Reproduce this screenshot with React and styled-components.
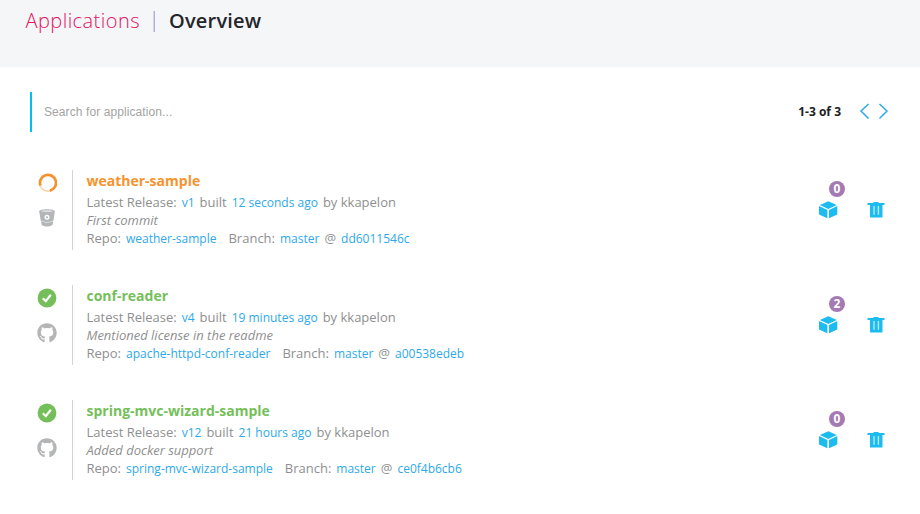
import React from "react";
import styled, { createGlobalStyle } from "styled-components";
import { FaGithub } from "react-icons/fa";

const GlobalStyle = createGlobalStyle`
  * { box-sizing: border-box; }
  body {
    margin: 0;
    background: #fff;
    color: #8f8f8f;
    font-family: "Open Sans", "Noto Sans", sans-serif;
    font-size: 13px;
  }
`;

const Page = styled.div`
  width: 100%;
  min-height: 514px;
`;

const Header = styled.header`
  display: flex;
  align-items: flex-start;
  height: 67px;
  padding: 6px 25.5px;
  background: #f5f6f8;
  font-size: 20px;
  line-height: 29px;
`;

const Section = styled.a`
  color: #e0135e;
  font-weight: 300;
  letter-spacing: 0.45px;
  width: 127.5px;
`;

const Separator = styled.span`
  width: 2px;
  height: 21px;
  margin: 5px 14px 0 0;
  border-left: 1px solid #d6d3da;
  border-right: 1px solid #b0b1dc;
`;

const Current = styled.h1`
  margin: 0;
  color: #25262b;
  font-size: 20px;
  font-weight: 600;
  letter-spacing: 0.2px;
`;

const Toolbar = styled.div`
  display: flex;
  align-items: center;
  height: 40px;
  margin: 25px 30px 38px;
`;

const Search = styled.input`
  flex: 1;
  height: 40px;
  padding: 0 12px;
  border: 0;
  border-left: 2px solid #00bff3;
  outline: 0;
  background: transparent;
  font: 12px "Liberation Sans", Arial, sans-serif;
  letter-spacing: 0.09px;
  &::placeholder { color: #a3a3a3; opacity: 1; }
`;

const Count = styled.span`
  color: #202124;
  font-size: 12px;
  font-weight: 700;
  margin: 0 18px 2px 0;
`;

const Pager = styled.div`
  display: flex;
  gap: 8px;
  margin: 0 1px 2px 0;
`;

const Arrow = styled.svg`
  display: block;
  width: 11px;
  height: 18px;
  fill: none;
  stroke: #2ea9ea;
  stroke-width: 1.5;
`;

const List = styled.main`
  display: flex;
  flex-direction: column;
  gap: 35px;
  padding: 0 30px;
`;

const Row = styled.article`
  display: flex;
  height: 80px;
`;

const Status = styled.div`
  display: flex;
  flex-direction: column;
  align-items: center;
  gap: 15px;
  width: 43px;
  padding: 3px 8px 0 0;
  border-right: 1px solid #d4d4d4;
`;

const Glyph = styled.svg`
  display: block;
  width: 20px;
  height: 20px;
`;

const GithubMark = styled(FaGithub)`
  display: block;
  width: 20px;
  height: 20px;
  color: #b4b5b7;
`;

const Details = styled.div`
  flex: 1;
  padding-left: 13.5px;
`;

const Name = styled.h2`
  margin: 0;
  padding-top: 1px;
  height: 23px;
  color: ${(p) => (p.$building ? "#f7932e" : "#75bf5b")};
  font-size: 14px;
  font-weight: 700;
  line-height: 20px;
`;

const Line = styled.div`
  display: flex;
  align-items: baseline;
  gap: 5px;
  height: 18px;
  line-height: 18px;
  white-space: pre;
  font-style: ${(p) => (p.$italic ? "italic" : "normal")};
`;

const Link = styled.a`
  color: #2ea9ea;
  font-size: 12px;
  margin-right: ${(p) => (p.$last ? "7px" : "0")};
`;

const Actions = styled.div`
  display: flex;
  align-items: flex-start;
  gap: 28px;
  padding: 30px 4px 0 0;
`;

const Images = styled.div`
  position: relative;
  height: 20px;
`;

const Badge = styled.span`
  position: absolute;
  top: -19px;
  left: 11px;
  width: 16px;
  height: 16px;
  border-radius: 50%;
  background: #a579b2;
  color: #fff;
  font-size: 12px;
  font-weight: 700;
  line-height: 16px;
  text-align: center;
`;

function Spinner() {
  return (
    <Glyph viewBox="0 0 20 20">
      <circle cx="11" cy="9.8" r="8.4" fill="none" stroke="#fbd0a0" strokeWidth="1.4" />
      <path d="M3.5 12.6A8 8 0 1 1 12.8 17.6" fill="none" stroke="#f7932e" strokeWidth="2.7" />
    </Glyph>
  );
}

function Check() {
  return (
    <Glyph viewBox="0 0 20 20">
      <circle cx="10" cy="10" r="9.4" fill="#75bf5b" />
      <path d="m5.8 10.2 3 3 5-6.4" fill="none" stroke="#fff" strokeWidth="2.2" />
    </Glyph>
  );
}

function Bucket() {
  return (
    <Glyph viewBox="0 0 20 20">
      <path d="M2.2 3.2C2.2.5 17.8.5 17.8 3.2L16.5 12.6Q10 15.6 3.7 12.6Z" fill="#b4b5b7" />
      <path d="M4 13.1Q10 16.1 16.2 13.1L15.5 17Q10 20.2 4.7 17Z" fill="#b4b5b7" />
      <ellipse cx="10" cy="3.2" rx="5.8" ry=".9" fill="#dedfe0" />
      <circle cx="10" cy="9.3" r="1.8" fill="none" stroke="#fff" strokeWidth="1.4" />
    </Glyph>
  );
}

function Cube() {
  return (
    <Glyph viewBox="0 0 20 20">
      <path d="m10.3 1.2 8.5 3.7-8.5 4-8.5-4Z" fill="#1cbcf0" />
      <path d="m1 6 8.4 4V18.3L1 14.5Z" fill="#1cbcf0" />
      <path d="m19.3 6-8.3 4V18.3l8.3-3.8Z" fill="#1cbcf0" />
    </Glyph>
  );
}

function Trash() {
  return (
    <Glyph viewBox="0 0 20 20">
      <path d="M7.5 2h5v1h6V5h-17V3h6Z" fill="#1cbcf0" />
      <path d="M4 4.5h12.5V17.5H4Z" fill="#1cbcf0" />
      <path d="M8 6v8.7M12.4 6v8.7" stroke="#b5e7fa" strokeWidth="1.4" />
    </Glyph>
  );
}

const apps = [
  { name: "weather-sample", building: true, version: "v1", time: "12 seconds ago", message: "First commit", repo: "weather-sample", commit: "dd6011546c", count: 0 },
  { name: "conf-reader", version: "v4", time: "19 minutes ago", message: "Mentioned license in the readme", repo: "apache-httpd-conf-reader", commit: "a00538edeb", count: 2 },
  { name: "spring-mvc-wizard-sample", version: "v12", time: "21 hours ago", message: "Added docker support", repo: "spring-mvc-wizard-sample", commit: "ce0f4b6cb6", count: 0 },
];

function AppRow({ app }) {
  return (
    <Row>
      <Status>
        {app.building ? <Spinner /> : <Check />}
        {app.building ? <Bucket /> : <GithubMark />}
      </Status>
      <Details>
        <Name $building={app.building}>{app.name}</Name>
        <Line>
          <span>Latest Release:</span>
          <Link>{app.version}</Link>
          <span>built</span>
          <Link>{app.time}</Link>
          <span>by kkapelon</span>
        </Line>
        <Line $italic>{app.message}</Line>
        <Line>
          <span>Repo:</span>
          <Link $last>{app.repo}</Link>
          <span>Branch:</span>
          <Link>master</Link>
          <span>@</span>
          <Link>{app.commit}</Link>
        </Line>
      </Details>
      <Actions>
        <Images>
          <Cube />
          <Badge>{app.count}</Badge>
        </Images>
        <Trash />
      </Actions>
    </Row>
  );
}

export default function App() {
  return (
    <Page>
      <GlobalStyle />
      <Header>
        <Section>Applications</Section>
        <Separator />
        <Current>Overview</Current>
      </Header>
      <Toolbar>
        <Search placeholder="Search for application..." />
        <Count>1-3 of 3</Count>
        <Pager>
          <Arrow viewBox="0 0 11 18"><path d="M9.5 2 2 9l7.5 7.5" /></Arrow>
          <Arrow viewBox="0 0 11 18"><path d="M1.5 2 9 9l-7.5 7.5" /></Arrow>
        </Pager>
      </Toolbar>
      <List>
        {apps.map((app) => <AppRow key={app.name} app={app} />)}
      </List>
    </Page>
  );
}
